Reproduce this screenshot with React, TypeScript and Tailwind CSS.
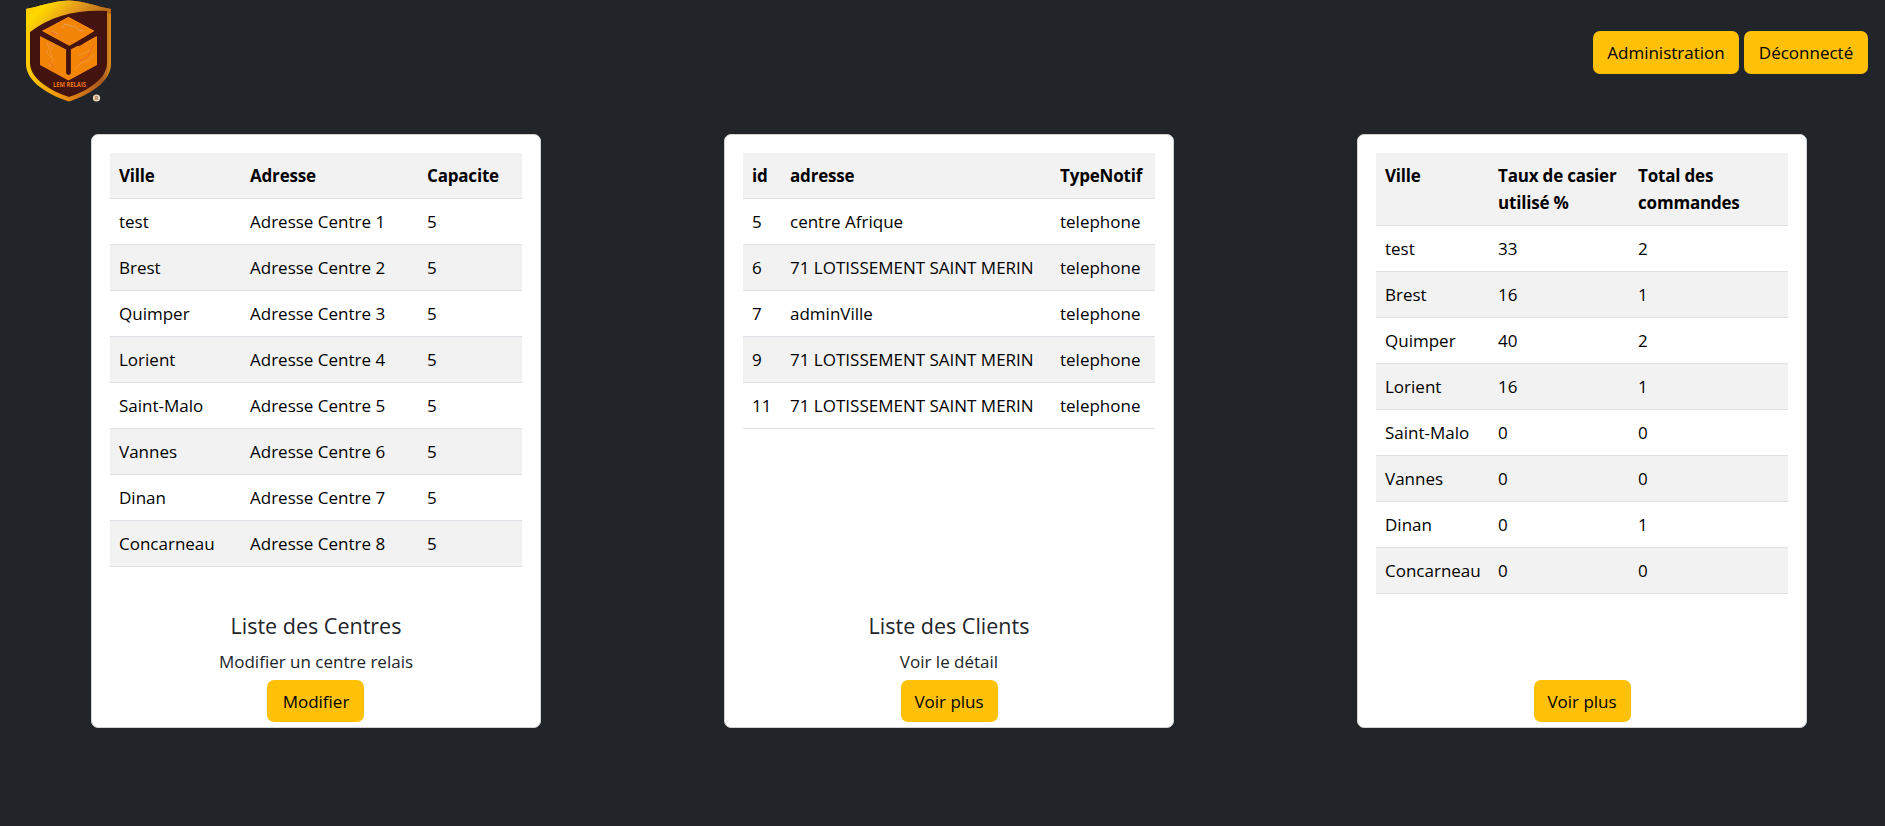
import React from "react";

function Logo() {
  return (
    <svg width="96" height="104" viewBox="0 0 96 104" className="block">
      <defs>
        <linearGradient id="gold" x1="0" y1="0" x2="1" y2="0.35">
          <stop offset="0" stopColor="#ffc800" />
          <stop offset="0.25" stopColor="#ffd800" />
          <stop offset="0.6" stopColor="#e39a1c" />
          <stop offset="1" stopColor="#b5671a" />
        </linearGradient>
        <linearGradient id="edge" x1="0" y1="0" x2="1" y2="0">
          <stop offset="0" stopColor="#ffcf00" />
          <stop offset="0.5" stopColor="#e8860f" />
          <stop offset="0.9" stopColor="#a85a20" />
          <stop offset="1" stopColor="#e0901a" />
        </linearGradient>
      </defs>
      <path d="M1 9C13 7 27 1 44 0.5C60 1 73 7 86 9V64C86 82 64 95 44 101.5C24 95 1 82 1 64Z" fill="url(#edge)" />
      <path d="M1 9C13 7 27 1 44 0.5C60 1 73 7 86 9V14C58 7 26 16 5 32H1Z" fill="url(#gold)" />
      <path d="M5 32C26 15 56 9 82 11V63C82 79 62 91 44 97C26 91 5 79 5 63Z" fill="#42130f" />
      <path d="M17 31L43.500 17L69.500 31L43.500 45.500Z M15 36L43.500 50.500L72 36V65L43.500 80.500L15 65Z" fill="#f28408" />
      <path d="M17 31L43.500 17L69.500 31L60 37L44 46Z" fill="#f28408" />
      <path d="M15.500 33L43.500 48V72.500M71 33L54 43.500" fill="none" stroke="#42130f" strokeWidth="4.800" strokeLinecap="round" strokeLinejoin="round" />
      <g fill="none" strokeWidth="0.7" opacity="0.75">
        <path d="M22 42L24 48L21 52L26 57M29 44L25 52L28 60L24 66M49 70L56 63L64 60L69 54M53 56L61 52L67 50" stroke="#f3a65b" />
        <path d="M27 31L33 34M49 25L53 30L59 31M37 28L40 24L49 27" stroke="#d9b7a0" />
        <path d="M26 32L31 34M24 61L29 68M55 61L63 56L69 44" stroke="#e94b3c" />
      </g>
      <text x="28" y="86.500" textLength="33" lengthAdjust="spacingAndGlyphs" fontSize="6.500" fontWeight="700" fill="#e8760c" fontFamily="Open Sans, sans-serif">LEM RELAIS</text>
      <circle cx="71.500" cy="98" r="3.600" fill="#ead9bd" />
      <text x="71.500" y="100" textAnchor="middle" fontSize="5.500" fontWeight="700" fill="#a5703c" fontFamily="Open Sans, sans-serif">R</text>
    </svg>
  );
}

function Button({ children, className }: { children: React.ReactNode; className: string }) {
  return (
    <button className={`flex items-center justify-center rounded-[7px] bg-[#ffc107] text-black ${className}`}>
      {children}
    </button>
  );
}

interface TableProps {
  head: string[];
  rows: string[][];
  widths: string[];
}

function StripedTable({ head, rows, widths }: TableProps) {
  return (
    <table className="w-[412px] table-fixed border-separate border-spacing-0 text-left text-black">
      <colgroup>
        {widths.map((w, i) => (
          <col key={i} className={w} />
        ))}
      </colgroup>
      <thead>
        <tr className="bg-[#f2f2f2]">
          {head.map((h) => (
            <th key={h} className="whitespace-pre border-b border-[#dee2e6] py-[9px] pl-[9px] align-top font-bold tracking-[-0.19px]">
              {h}
            </th>
          ))}
        </tr>
      </thead>
      <tbody>
        {rows.map((r, i) => (
          <tr key={i} className="even:bg-[#f2f2f2]">
            {r.map((c, j) => (
              <td key={j} className="whitespace-nowrap border-b border-[#dee2e6] py-[9px] pl-[9px]">
                {c}
              </td>
            ))}
          </tr>
        ))}
      </tbody>
    </table>
  );
}

interface CardProps extends TableProps {
  title?: string;
  text?: string;
  action: string;
}

function Card({ title, text, action, ...table }: CardProps) {
  return (
    <section className="flex h-[594px] w-[450px] flex-col items-center rounded-[7px] border border-[#d2d3d3] bg-white pt-[18px] pb-[5px]">
      <StripedTable {...table} />
      <div className="mt-auto flex flex-col items-center text-[#212529]">
        {title && <h5 className="mb-[9px] text-[21.500px] leading-[27px] font-medium">{title}</h5>}
        {text && <p className="mb-[5px]">{text}</p>}
        <Button className="h-[42px] w-[97px]">{action}</Button>
      </div>
    </section>
  );
}

const villes = ["test", "Brest", "Quimper", "Lorient", "Saint-Malo", "Vannes", "Dinan", "Concarneau"];
const taux = ["33", "16", "40", "16", "0", "0", "0", "0"];
const commandes = ["2", "1", "2", "1", "0", "0", "1", "0"];
const lotissement = "71 LOTISSEMENT SAINT MERIN";

export default function App() {
  return (
    <div className="min-h-screen bg-[#212529] font-['Open_Sans',sans-serif] text-[17px] leading-[27px]">
      <header className="flex h-[104px] items-center justify-between pr-[17px] pl-[25px]">
        <Logo />
        <nav className="flex gap-[5px]">
          <Button className="h-[43px] w-[146px]">Administration</Button>
          <Button className="h-[43px] w-[124px]">Déconnecté</Button>
        </nav>
      </header>
      <main className="flex gap-[183px] pt-[30px] pl-[91px]">
        <Card
          head={["Ville", "Adresse", "Capacite"]}
          rows={villes.map((v, i) => [v, `Adresse Centre ${i + 1}`, "5"])}
          widths={["w-[131px]", "w-[177px]", "w-[104px]"]}
          title="Liste des Centres"
          text="Modifier un centre relais"
          action="Modifier"
        />
        <Card
          head={["id", "adresse", "TypeNotif"]}
          rows={[
            ["5", "centre Afrique", "telephone"],
            ["6", lotissement, "telephone"],
            ["7", "adminVille", "telephone"],
            ["9", lotissement, "telephone"],
            ["11", lotissement, "telephone"],
          ]}
          widths={["w-[38px]", "w-[270px]", "w-[104px]"]}
          title="Liste des Clients"
          text="Voir le détail"
          action="Voir plus"
        />
        <Card
          head={["Ville", "Taux de casier\nutilisé %", "Total des\ncommandes"]}
          rows={villes.map((v, i) => [v, taux[i], commandes[i]])}
          widths={["w-[113px]", "w-[140px]", "w-[159px]"]}
          action="Voir plus"
        />
      </main>
    </div>
  );
}
